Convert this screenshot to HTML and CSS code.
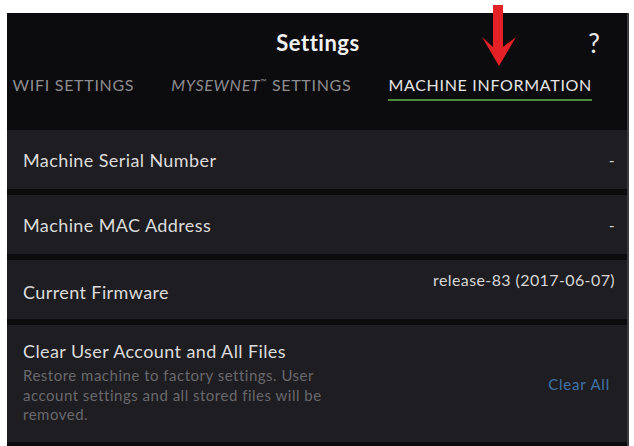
FILE: index.html
```html
<!DOCTYPE html>
<html>
<head>
<meta charset="utf-8">
<link rel="stylesheet" href="styles.css">
</head>
<body>
<div class="panel">
  <div class="header">
    <div class="titlebar">
      <span class="title">Settings</span>
      <span class="help">?</span>
    </div>
    <div class="tabs">
      <span class="tab">WIFI SETTINGS</span>
      <span class="tab"><i>MYSEWNET</i><sup>™</sup> SETTINGS</span>
      <span class="tab active">MACHINE INFORMATION</span>
    </div>
  </div>
  <div class="list">
    <div class="row">
      <span class="label">Machine Serial Number</span>
      <span class="value">-</span>
    </div>
    <div class="row">
      <span class="label">Machine MAC Address</span>
      <span class="value">-</span>
    </div>
    <div class="row firmware">
      <span class="label">Current Firmware</span>
      <span class="value">release-83 (2017-06-07)</span>
    </div>
    <div class="row tall">
      <div class="info">
        <div class="label">Clear User Account and All Files</div>
        <div class="desc">Restore machine to factory settings. User account settings and all stored files will be removed.</div>
      </div>
      <span class="action">Clear All</span>
    </div>
  </div>
  <svg class="arrow" width="40" height="70" viewBox="478 0 40 70">
    <polygon fill="#e42127" points="493,5 503,5 503,47 516,37 499,66 482,37 493,47"/>
  </svg>
</div>
</body>
</html>
```

FILE: styles.css
```css
html, body {
  margin: 0;
  padding: 0;
  background: #ffffff;
}
body {
  font-family: Lato, "Noto Sans", sans-serif;
  height: 446px;
  overflow: hidden;
}
.panel {
  position: relative;
  margin: 13px 0 0 7px;
  width: 622px;
  height: 433px;
  background: #0c0b0e;
  border-right: 2px solid #3c3c3e;
  box-sizing: border-box;
}
.header {
  height: 116px;
  display: flex;
  flex-direction: column;
}
.titlebar {
  height: 58px;
  position: relative;
  display: flex;
  align-items: center;
  justify-content: center;
}
.title {
  color: #f2f2f2;
  font-size: 22px;
  font-weight: 700;
  letter-spacing: 0.5px;
  margin-left: 2px;
}
.help {
  position: absolute;
  right: 27px;
  top: 14px;
  color: #ececec;
  font-size: 26px;
  font-weight: 400;
}
.tabs {
  height: 58px;
  display: flex;
  justify-content: flex-end;
  align-items: flex-start;
  gap: 37px;
  padding-right: 35px;
  overflow: hidden;
  white-space: nowrap;
}
.tab {
  flex: none;
  color: #8e8d90;
  font-size: 16px;
  letter-spacing: 0.7px;
  line-height: 18px;
  padding: 5px 0 5px;
  border-bottom: 2px solid transparent;
}
.tab i {
  font-style: italic;
}
.tab sup {
  font-size: 8px;
  vertical-align: 6px;
  line-height: 0;
}
.tab.active {
  color: #e6e6e6;
  border-bottom-color: #4f8a38;
}
.list {
  display: flex;
  flex-direction: column;
  gap: 6px;
  padding-top: 1px;
}
.row {
  height: 59px;
  background: #1e1d21;
  display: flex;
  align-items: center;
  justify-content: space-between;
  padding: 0 12px 0 16px;
  box-sizing: border-box;
}
.label {
  color: #dcdcdc;
  font-size: 18px;
  letter-spacing: 0.4px;
  line-height: 20px;
}
.value {
  color: #d6d6d6;
  font-size: 16px;
  letter-spacing: 0.4px;
}
.firmware .label {
  margin-top: 4px;
}
.firmware .value {
  margin-bottom: 20px;
}
.row.tall {
  height: 117px;
  align-items: flex-start;
}
.info {
  padding-top: 16px;
  width: 320px;
}
.desc {
  margin-top: 5px;
  color: #6a696d;
  font-size: 15px;
  letter-spacing: 0.5px;
  line-height: 19.5px;
}
.action {
  align-self: center;
  color: #3f74a8;
  font-size: 15px;
  letter-spacing: 0.8px;
  padding: 8px 5px 8px 0;
}
.arrow {
  position: absolute;
  left: 471px;
  top: -13px;
}
```
